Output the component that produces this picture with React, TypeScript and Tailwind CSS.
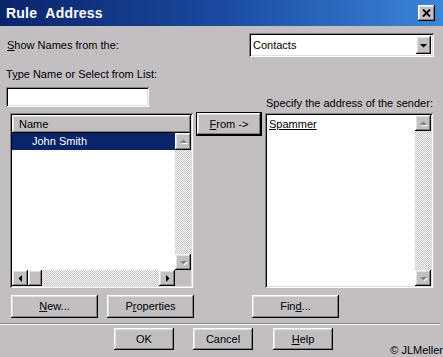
import React from 'react';

const face = 'bg-[#c2bec2]';
const raised =
  'bg-[#c2bec2] shadow-[inset_-1px_-1px_0_#000,inset_1px_1px_0_#fff,inset_-2px_-2px_0_#808080,inset_2px_2px_0_#dfdfdf]';
const sunken =
  'shadow-[inset_1px_1px_0_#808080,inset_-1px_-1px_0_#fff,inset_2px_2px_0_#000,inset_-2px_-2px_0_#dfdfdf]';
const dither =
  'bg-[image:repeating-conic-gradient(#c2bec2_0_25%,#ffffff_0_50%)] bg-[length:2px_2px]';

type Dir = 'up' | 'down' | 'left' | 'right';

const Arrow = ({ dir, disabled, w = 16, h = 16 }: { dir: Dir; disabled?: boolean; w?: number; h?: number }) => {
  const pts: Record<Dir, string> = {
    up: '4,9 11,9 7.5,5.5',
    down: '4,6 11,6 7.5,9.5',
    left: '9,4 9,11 5.5,7.5',
    right: '6,4 6,11 9.5,7.5',
  };
  return (
    <div className={`${raised} flex shrink-0 items-center justify-center`} style={{ width: w, height: h }}>
      <svg width="15" height="15" viewBox="0 0 15 15">
        {disabled && <polygon points={pts[dir]} fill="#ffffff" transform="translate(1 1)" />}
        <polygon points={pts[dir]} fill={disabled ? '#808080' : '#000000'} />
      </svg>
    </div>
  );
};

const Btn = ({ children, w, h = 23, extra = '' }: { children: React.ReactNode; w: number; h?: number; extra?: string }) => (
  <div
    className={`${raised} flex shrink-0 items-center justify-center text-[11px] text-black ${extra}`}
    style={{ width: w, height: h }}
  >
    <span>{children}</span>
  </div>
);

export default function App() {
  return (
    <div
      className={`${face} flex h-[357px] w-[443px] flex-col overflow-hidden text-[11px] leading-[13px] text-black`}
      style={{ fontFamily: '"Liberation Sans", Arial, sans-serif' }}
    >
      {/* Title bar */}
      <div className="flex h-[26px] shrink-0 items-center justify-between bg-gradient-to-r from-[#0a246a] via-[#1a4aa0] to-[#3c86d8] pr-[8px] pl-[6px]">
        <span className="text-[14px] leading-none font-bold tracking-[0.2px] text-white">
          Rule&nbsp;&nbsp;Address
        </span>
        <div className={`${raised} flex h-[16px] w-[17px] items-center justify-center`}>
          <svg width="9" height="8" viewBox="0 0 9 8">
            <path d="M1 0.5 L8 7.5 M8 0.5 L1 7.5" stroke="#000" strokeWidth="1.8" />
          </svg>
        </div>
      </div>

      {/* Show names from */}
      <div className="mt-[7px] flex h-[24px] items-center">
        <span className="pl-[7px]">
          <u>S</u>how Names from the:
        </span>
        <div className={`ml-auto mr-[9px] flex h-[24px] w-[185px] items-center bg-white ${sunken} pr-[3px] pl-[4px]`}>
          <span className="flex-1">Contacts</span>
          <Arrow dir="down" w={15} h={18} />
        </div>
      </div>

      <div className="mt-[11px] h-[13px] pl-[6px]">
        T<u>y</u>pe Name or Select from List:
      </div>

      <div className="mt-[6px] flex h-[26px]">
        <div className={`ml-[6px] h-[20px] w-[143px] bg-white ${sunken}`} />
        <span className="mt-[10px] ml-[117px]">Specify the address of the sender:</span>
      </div>

      {/* Lists */}
      <div className="flex h-[175px] items-start">
        {/* Left list view */}
        <div className={`ml-[10px] flex h-[175px] w-[183px] flex-col bg-white p-[2px] ${sunken}`}>
          <div className={`${raised} flex h-[18px] shrink-0 items-center pl-[7px]`}>Name</div>
          <div className="flex flex-1">
            <div className="flex w-[163px] flex-col">
              <div className="flex h-[17px] items-center bg-[#0a246a] pl-[20px] text-white">John Smith</div>
              <div className="flex-1" />
              <div className="flex h-[16px]">
                <Arrow dir="left" />
                <div className={`${raised} h-[16px] w-[14px]`} />
                <div className={`flex-1 ${dither}`} />
                <Arrow dir="right" />
              </div>
            </div>
            <div className="flex w-[16px] flex-col">
              <Arrow dir="up" disabled h={17} />
              <div className={`flex-1 ${dither}`} />
              <Arrow dir="down" disabled />
              <div className={`${face} h-[16px]`} />
            </div>
          </div>
        </div>

        <Btn w={64} h={22} extra="ml-[4px] outline outline-1 outline-black">
          <u>F</u>rom -&gt;
        </Btn>

        {/* Right address box */}
        <div className={`ml-[4px] flex h-[175px] w-[168px] bg-white p-[2px] ${sunken}`}>
          <div className="flex-1 pt-[3px] pl-[2px]">
            <span className="underline">Spammer</span>
          </div>
          <div className="flex w-[16px] flex-col">
            <Arrow dir="up" disabled />
            <div className={`flex-1 ${dither}`} />
            <Arrow dir="down" disabled />
          </div>
        </div>
      </div>

      {/* Action buttons */}
      <div className="mt-[7px] flex h-[23px]">
        <Btn w={87} extra="ml-[11px]">
          <u>N</u>ew...
        </Btn>
        <Btn w={87} extra="ml-[9px]">
          P<u>r</u>operties
        </Btn>
        <Btn w={87} extra="ml-[58px]">
          Fin<u>d</u>...
        </Btn>
      </div>

      <div className="mt-[5px] h-[2px] w-[440px] border-t border-b border-t-[#808080] border-b-white" />

      <div className="mt-[3px] flex h-[22px] items-start">
        <Btn w={60} h={22} extra="ml-[114px]">
          OK
        </Btn>
        <Btn w={60} h={22} extra="ml-[19px]">
          Cancel
        </Btn>
        <Btn w={60} h={22} extra="ml-[20px]">
          <u>H</u>elp
        </Btn>
        <span className="mt-[16px] ml-auto shrink-0 whitespace-nowrap">© JLMeller</span>
      </div>
    </div>
  );
}
